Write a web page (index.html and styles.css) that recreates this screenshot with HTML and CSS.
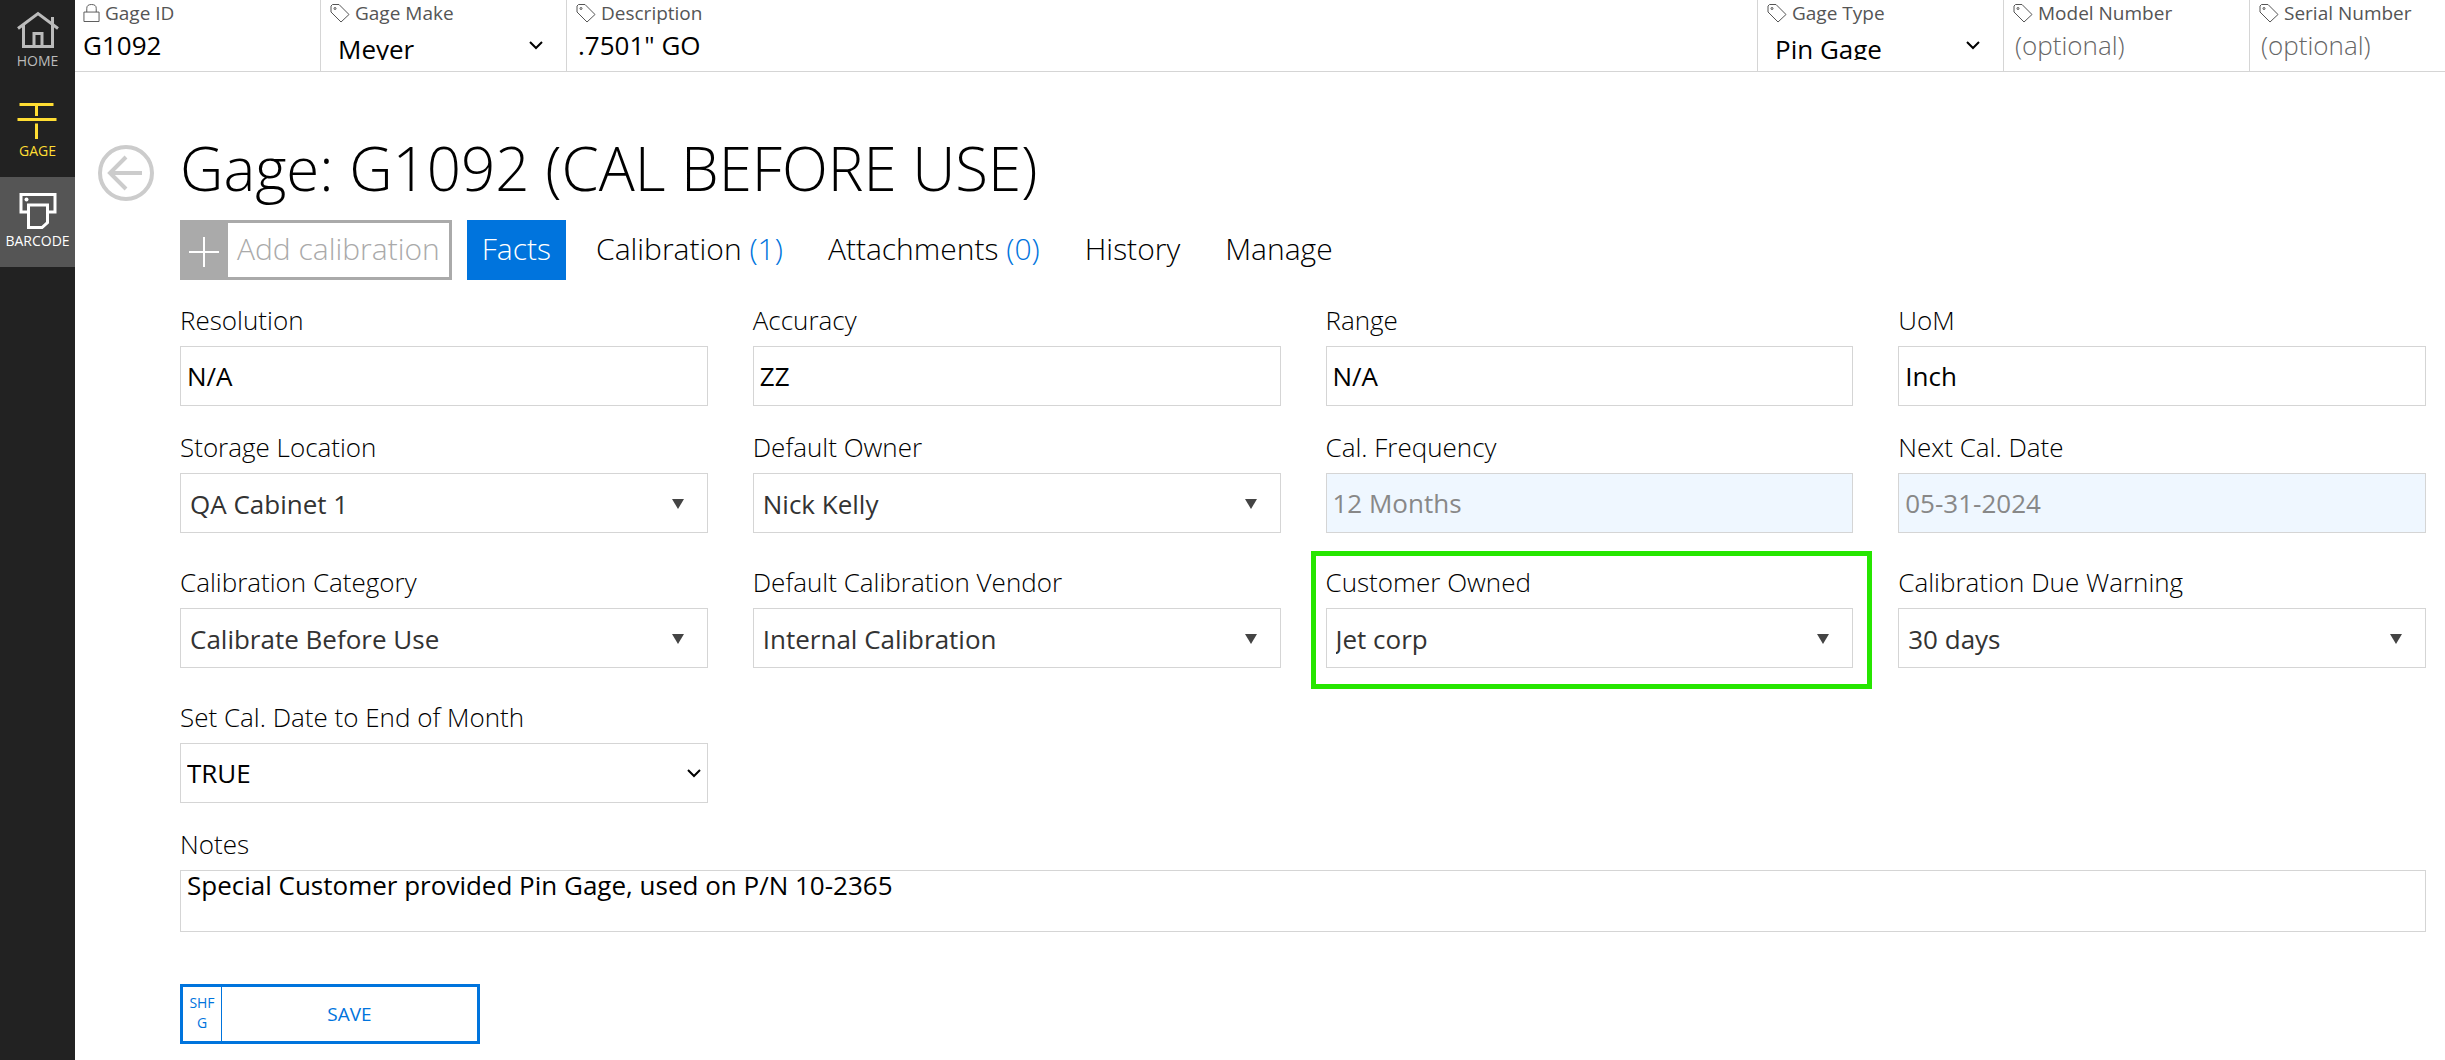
FILE: index.html
```
<!DOCTYPE html>
<html lang="en">
<head>
    <meta charset="UTF-8">
    <meta name="viewport" content="width=device-width, initial-scale=1.0">
    <title>Gage: G1092</title>
    <link rel="stylesheet" href="styles.css">
</head>
<body>
    <!-- shared icons -->
    <svg class="icon-defs" aria-hidden="true">
        <symbol id="tag" viewBox="0 0 20 20">
            <path d="M1 3 L2.500 1.500 H9 L19 11.500 L11 19 L1 9 Z" />
            <circle cx="5" cy="5.500" r="1" />
        </symbol>
        <symbol id="chevron" viewBox="0 0 14 9">
            <path d="M1 1 L7 7 L13 1" />
        </symbol>
    </svg>

    <nav class="sidebar">
        <a class="nav-item" href="#">
            <svg class="nav-icon" viewBox="0 0 42 40">
                <path d="M1 17.500 L21 2.500 L41 17.500 M6.500 14 V35.500 H35.500 V14 M35.500 6 V13 M17 35 V22.500 H25 V35" />
            </svg>
            HOME
        </a>
        <a class="nav-item gage" href="#">
            <svg class="nav-icon" viewBox="0 0 42 40">
                <path d="M2.500 3.500 H36.500 M19.500 4 V15 M0.500 18.500 H39.500 M19.500 22.500 V38" />
            </svg>
            GAGE
        </a>
        <a class="nav-item active" href="#">
            <svg class="nav-icon" viewBox="0 0 42 40">
                <path d="M10 21 H4 V3.500 H38 V21 H31 M11.500 14 H30.500 V31.500 L25 36.500 H11.500 Z" />
                <circle class="dot" cx="9.500" cy="8.500" r="2" />
            </svg>
            BARCODE
        </a>
    </nav>

    <div class="page">
        <header class="topbar">
            <div class="cell first">
                <label for="gageId">
                    <svg class="label-icon lock" viewBox="0 0 18 20">
                        <path d="M1 9 H17 V19 H1 Z M4 9 V5 Q4 1 9 1 Q14 1 14 5 V9" />
                    </svg>
                    Gage ID
                </label>
                <input type="text" id="gageId" value="G1092">
            </div>
            <div class="cell">
                <label for="gageMake"><svg class="label-icon"><use href="#tag" /></svg>Gage Make</label>
                <div class="cell-select">
                    <select id="gageMake"><option>Meyer</option></select>
                    <svg class="chevron"><use href="#chevron" /></svg>
                </div>
            </div>
            <div class="cell wide">
                <label for="description"><svg class="label-icon"><use href="#tag" /></svg>Description</label>
                <input type="text" id="description" value=".7501&quot; GO">
            </div>
            <div class="cell">
                <label for="gageType"><svg class="label-icon"><use href="#tag" /></svg>Gage Type</label>
                <div class="cell-select">
                    <select id="gageType"><option>Pin Gage</option></select>
                    <svg class="chevron"><use href="#chevron" /></svg>
                </div>
            </div>
            <div class="cell">
                <label for="model"><svg class="label-icon"><use href="#tag" /></svg>Model Number</label>
                <input type="text" id="model" placeholder="(optional)">
            </div>
            <div class="cell last">
                <label for="serial"><svg class="label-icon"><use href="#tag" /></svg>Serial Number</label>
                <input type="text" id="serial" placeholder="(optional)">
            </div>
        </header>

        <main class="main">
            <a class="back" href="#" aria-label="Back">
                <svg viewBox="0 0 56 56">
                    <circle cx="28" cy="28" r="26" />
                    <path d="M44 28 H12 M28 12 L12 28 L28 44" />
                </svg>
            </a>

            <div class="content">
                <h1>Gage: G1092 (CAL BEFORE USE)</h1>

                <div class="tabs">
                    <button class="add" type="button">
                        <span class="plus">
                            <svg viewBox="0 0 30 30"><path d="M15 0 V30 M0 15 H30" /></svg>
                        </span>
                        <span class="add-text">Add calibration</span>
                    </button>
                    <a class="tab selected" href="#">Facts</a>
                    <a class="tab" href="#">Calibration <span class="count">(1)</span></a>
                    <a class="tab" href="#">Attachments <span class="count">(0)</span></a>
                    <a class="tab" href="#">History</a>
                    <a class="tab" href="#">Manage</a>
                </div>

                <form>
                    <div class="fields">
                        <div class="field">
                            <label for="resolution">Resolution</label>
                            <input class="control" type="text" id="resolution" value="N/A">
                        </div>
                        <div class="field">
                            <label for="accuracy">Accuracy</label>
                            <input class="control" type="text" id="accuracy" value="ZZ">
                        </div>
                        <div class="field">
                            <label for="range">Range</label>
                            <input class="control" type="text" id="range" value="N/A">
                        </div>
                        <div class="field">
                            <label for="uom">UoM</label>
                            <input class="control" type="text" id="uom" value="Inch">
                        </div>

                        <div class="field combo">
                            <label for="location">Storage Location</label>
                            <div class="select-box">
                                <select class="control" id="location"><option>QA Cabinet 1</option></select>
                                <svg class="arrow" viewBox="0 0 12 10"><path d="M0 0 H12 L6 10 Z" /></svg>
                            </div>
                        </div>
                        <div class="field combo">
                            <label for="owner">Default Owner</label>
                            <div class="select-box">
                                <select class="control" id="owner"><option>Nick Kelly</option></select>
                                <svg class="arrow" viewBox="0 0 12 10"><path d="M0 0 H12 L6 10 Z" /></svg>
                            </div>
                        </div>
                        <div class="field">
                            <label for="frequency">Cal. Frequency</label>
                            <input class="control" type="text" id="frequency" value="12 Months" disabled>
                        </div>
                        <div class="field">
                            <label for="nextDate">Next Cal. Date</label>
                            <input class="control" type="text" id="nextDate" value="05-31-2024" disabled>
                        </div>

                        <div class="field combo">
                            <label for="category">Calibration Category</label>
                            <div class="select-box">
                                <select class="control" id="category"><option>Calibrate Before Use</option></select>
                                <svg class="arrow" viewBox="0 0 12 10"><path d="M0 0 H12 L6 10 Z" /></svg>
                            </div>
                        </div>
                        <div class="field combo">
                            <label for="vendor">Default Calibration Vendor</label>
                            <div class="select-box">
                                <select class="control" id="vendor"><option>Internal Calibration</option></select>
                                <svg class="arrow" viewBox="0 0 12 10"><path d="M0 0 H12 L6 10 Z" /></svg>
                            </div>
                        </div>
                        <div class="field combo highlight">
                            <label for="customer">Customer Owned</label>
                            <div class="select-box">
                                <select class="control" id="customer"><option>Jet corp</option></select>
                                <svg class="arrow" viewBox="0 0 12 10"><path d="M0 0 H12 L6 10 Z" /></svg>
                            </div>
                        </div>
                        <div class="field combo">
                            <label for="warning">Calibration Due Warning</label>
                            <div class="select-box">
                                <select class="control" id="warning"><option>30 days</option></select>
                                <svg class="arrow" viewBox="0 0 12 10"><path d="M0 0 H12 L6 10 Z" /></svg>
                            </div>
                        </div>

                        <div class="field">
                            <label for="endOfMonth">Set Cal. Date to End of Month</label>
                            <div class="select-box">
                                <select class="control" id="endOfMonth"><option>TRUE</option><option>FALSE</option></select>
                                <svg class="chevron"><use href="#chevron" /></svg>
                            </div>
                        </div>

                        <div class="field full">
                            <label for="notes">Notes</label>
                            <textarea class="control" id="notes">Special Customer provided Pin Gage, used on P/N 10-2365</textarea>
                        </div>
                    </div>

                    <button class="save" type="button">
                        <span class="shortcut">SHF<br>G</span>
                        <span class="save-text">SAVE</span>
                    </button>
                </form>
            </div>
        </main>
    </div>
</body>
</html>
```
FILE: styles.css
```
* {
    margin: 0;
    padding: 0;
    box-sizing: border-box;
    font-family: "Open Sans", sans-serif;
}

body {
    display: flex;
    min-height: 100vh;
    background-color: #fff;
    color: #000;
}

a {
    text-decoration: none;
    color: inherit;
}

svg {
    display: block;
    fill: none;
    stroke: currentColor;
}

.icon-defs {
    position: absolute;
    width: 0;
    height: 0;
}

/* sidebar */
.sidebar {
    flex: none;
    width: 75px;
    background-color: #222;
}

.nav-item {
    display: flex;
    flex-direction: column;
    align-items: center;
    height: 90px;
    padding-top: 14px;
    font-size: 14px;
    line-height: 20px;
    color: #bbb;
}

.nav-item:first-child {
    margin-top: -3px;
}

.nav-item.gage {
    color: #fd3;
}

.nav-item.active {
    background-color: #555;
    color: #fff;
}

.nav-icon {
    width: 42px;
    height: 40px;
    stroke-width: 3;
}

.nav-icon .dot {
    fill: currentColor;
    stroke: none;
}

/* top bar */
.page {
    flex: 1;
    min-width: 0;
}

.topbar {
    display: flex;
    height: 72px;
    border-bottom: 1px solid #d5d5d5;
}

.cell {
    flex: none;
    width: 246px;
    padding: 0 9px;
    border-right: 1px solid #d5d5d5;
}

.cell.wide {
    flex: 1;
}

.cell.last {
    width: 195px;
    border-right: none;
}

.cell label {
    display: flex;
    align-items: center;
    gap: 5px;
    height: 26px;
    font-size: 19px;
    line-height: 26px;
    white-space: nowrap;
    color: #555;
}

.label-icon {
    flex: none;
    width: 20px;
    height: 20px;
}

.label-icon.lock {
    width: 17px;
}

.cell input,
.cell select {
    width: 100%;
    border: none;
    background: none;
    font-size: 26px;
    color: #000;
}

.cell input {
    height: 38px;
    padding-left: 2px;
}

.cell.first input {
    padding-left: 0;
}

.cell.first {
    padding-left: 8px;
}

.cell input::placeholder {
    font-weight: 300;
    color: #666;
}

.cell-select {
    position: relative;
    height: 34px;
    overflow: hidden;
}

.cell-select select {
    appearance: none;
    height: 46px;
    padding-left: 8px;
}

.chevron {
    position: absolute;
    width: 14px;
    height: 9px;
    stroke: #000;
    stroke-width: 2;
    pointer-events: none;
}

.cell-select .chevron {
    top: 15px;
    right: 14px;
}

/* main */
.main {
    display: flex;
    padding: 55px 19px 16px 23px;
}

.back {
    flex: none;
    width: 56px;
    margin: 18px 26px 0 0;
    color: #ccc;
}

.back svg {
    width: 56px;
    height: 56px;
    stroke-width: 4;
}

.content {
    flex: 1;
    min-width: 0;
}

h1 {
    font-size: 60px;
    line-height: 82px;
    font-weight: 300;
}

.tabs {
    display: flex;
    gap: 15px;
    height: 60px;
    margin: 11px 0 23px;
}

.add,
.tab {
    font-size: 30px;
    line-height: 58px;
    font-weight: 300;
    white-space: nowrap;
}

.add {
    display: flex;
    border: 3px solid #aaa;
    background-color: #fff;
    color: #aaa;
    line-height: 52px;
    cursor: pointer;
}

.plus {
    display: flex;
    align-items: center;
    justify-content: center;
    width: 45px;
    height: 54px;
    padding: 4px 3px 0 0;
    background-color: #aaa;
    color: #fff;
}

.plus svg {
    width: 30px;
    height: 30px;
    stroke-width: 2;
}

.add-text {
    padding: 0 9px;
}

.tab {
    padding: 0 15px;
}

.tab.selected {
    background-color: #0074dd;
    color: #fff;
}

.count {
    color: #0074dd;
}

/* form */
.fields {
    display: grid;
    grid-template-columns: repeat(4, 1fr);
    gap: 24px 45px;
}

.field label {
    display: block;
    margin-bottom: 8px;
    font-size: 26px;
    line-height: 35px;
    font-weight: 300;
}

.field.combo {
    padding-bottom: 8px;
}

.field.full {
    grid-column: 1 / -1;
}

.control {
    display: block;
    width: 100%;
    height: 60px;
    padding: 0 6px;
    border: 1px solid #d5d5d5;
    border-radius: 0;
    background-color: #fff;
    font-size: 26px;
    color: #000;
}

.control:disabled {
    background-color: #eff7ff;
    color: #888;
}

select.control {
    appearance: none;
}

.combo select.control {
    padding: 2px 9px 0;
    color: #333;
}

textarea.control {
    height: 62px;
    line-height: 28px;
    resize: none;
}

.select-box {
    position: relative;
}

.arrow {
    position: absolute;
    top: 26px;
    right: 24px;
    width: 12px;
    height: 10px;
    fill: #444;
    stroke: none;
    pointer-events: none;
}

.select-box .chevron {
    top: 26px;
    right: 7px;
}

.highlight {
    position: relative;
}

.highlight::after {
    content: "";
    position: absolute;
    inset: -14px -19px -13px -15px;
    border: 5px solid #26e600;
    pointer-events: none;
}

.save {
    display: flex;
    width: 300px;
    height: 60px;
    margin-top: 52px;
    border: 3px solid #0074dd;
    background-color: #fff;
    color: #0074dd;
    cursor: pointer;
}

.shortcut {
    width: 39px;
    height: 54px;
    padding-top: 6px;
    border-right: 1px solid #0074dd;
    font-size: 14px;
    line-height: 20px;
}

.save-text {
    flex: 1;
    font-size: 19px;
    line-height: 54px;
}
```
